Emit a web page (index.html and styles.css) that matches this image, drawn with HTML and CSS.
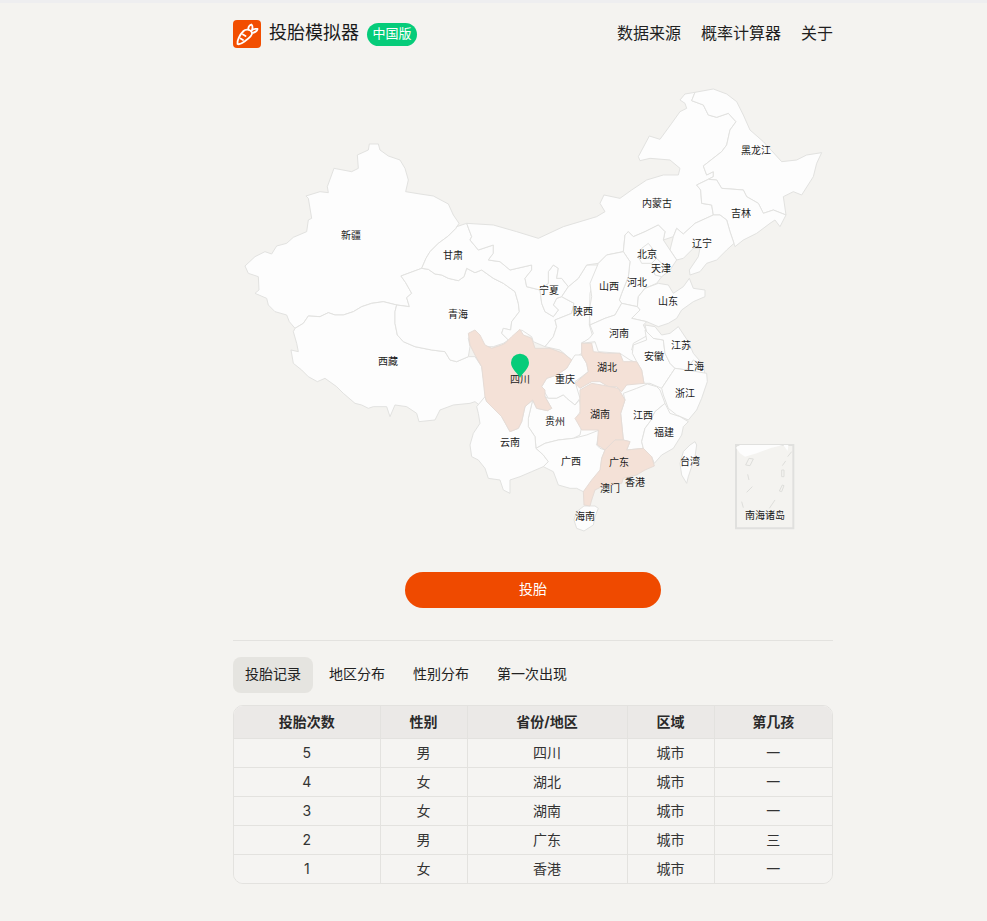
FILE: index.html
```html
<!DOCTYPE html>
<html lang="zh-CN">
<head>
<meta charset="utf-8">
<title>投胎模拟器</title>
<link rel="stylesheet" href="styles.css">
</head>
<body>
<div class="topbar"></div>
<main class="page">
  <header class="header">
    <div class="brand">
      <svg class="logo" viewBox="0 0 28 28" aria-hidden="true">
        <rect class="logo-bg" width="28" height="28" rx="4"/>
        <path class="logo-line" d="M4.500 24C3.800 21 6.500 15 10.500 11C13 8.500 17.500 9.500 19 12.500C19.800 15 15 19 11.500 21.500C9 23.300 6 24.800 4.500 24Z"/>
        <path class="logo-line" d="M15.500 9.500C15 7.500 16 5.500 18.500 4.500C19.800 6 19.800 8 18.800 10.500M18.800 10.500C20 9 22 8.500 24.500 9C24.200 11 22.500 12 20 12.800M10 14.500L12.500 16M7.500 18.500L10 20"/>
      </svg>
      <span class="title">投胎模拟器</span>
      <span class="badge">中国版</span>
    </div>
    <nav class="nav">
      <a>数据来源</a>
      <a>概率计算器</a>
      <a>关于</a>
    </nav>
  </header>

  <svg class="map" viewBox="233 70 600 480" role="img" aria-label="中国地图">
    <polygon class="fill" points="480,250 600,250 640,240 650,300 600,340 520,335"/>
    <polygon class="fill" points="585,345 640,335 680,350 695,390 670,440 640,455 580,470 530,450 505,420 535,395 555,355"/>
    <g transform="translate(240,130) scale(.33333)">
      <polygon class="land" points="388,42 415,42 420,60 445,78 480,90 495,115 505,150 497,185 540,192 580,198 625,222 640,255 657,280 648,295 625,318 595,340 570,365 558,385 545,415 483,438 497,458 515,490 500,503 508,530 470,525 430,515 395,520 365,530 340,545 310,555 285,555 265,548 240,560 205,558 190,580 165,595 148,575 140,555 105,545 85,525 80,505 45,490 57,480 55,440 25,430 15,408 45,380 75,365 95,372 110,348 140,340 160,322 200,305 205,270 215,265 205,205 198,198 240,185 265,188 262,170 282,115 335,125 355,115 352,75 385,60"/>
      <polygon class="land" points="165,595 190,580 205,558 240,560 265,548 285,555 310,555 340,545 365,530 395,520 430,515 470,525 465,545 465,580 472,615 490,635 525,650 575,660 615,665 630,690 650,695 685,680 705,680 725,710 735,775 738,825 718,825 705,815 690,820 640,825 600,840 585,870 537,875 530,850 500,830 465,825 450,860 440,830 400,830 385,835 365,825 345,820 310,790 290,770 255,745 232,755 205,740 185,720 160,700 153,660 175,665 170,640 160,605"/>
      <polygon class="land" points="483,438 545,415 565,418 585,432 605,435 625,445 655,452 672,440 680,415 705,428 725,420 760,445 790,460 825,485 835,520 838,545 815,575 812,600 790,595 785,610 805,630 790,640 760,650 735,650 700,605 685,625 690,650 685,680 650,695 630,690 615,665 575,660 525,650 490,635 472,615 465,580 465,545 470,525 508,530 500,503 515,490 497,458"/>
    </g>
    <g transform="translate(450,190) scale(.33333)">
      <polygon class="land" points="50,100 65,140 60,150 85,180 130,165 130,190 115,210 150,215 180,240 245,225 245,240 225,265 230,290 270,300 275,340 285,365 310,380 325,360 310,345 320,325 335,320 372,340 365,370 315,390 320,410 310,440 285,470 250,455 245,440 215,420 190,450 175,450 155,430 160,415 182,420 185,395 208,365 205,340 195,305 160,280 130,265 95,240 75,248 50,235 42,260 25,272 -5,265 -25,255 -45,252 -65,238 -85,235 -72,205 -60,185 -35,160 -5,138 18,115 20,110"/>
      <polygon class="land" points="295,245 310,225 325,235 320,265 335,265 355,290 335,320 320,325 310,345 325,360 310,380 285,365 275,340 270,300 295,280"/>
      <polygon class="land" points="355,290 385,265 410,225 445,225 420,310 418,405 430,445 395,458 395,490 365,510 330,480 285,470 310,440 320,410 315,390 365,370 372,340 335,320"/>
    </g>
    <g transform="translate(530,80) scale(.33333)">
      <polygon class="land" points="-190,430 -110,435 -40,455 25,475 100,440 200,410 225,395 210,370 222,345 270,355 305,330 350,300 400,285 445,285 450,265 420,240 360,235 330,242 325,230 358,168 390,178 425,130 450,95 470,85 465,70 450,60 465,42 495,37 485,62 520,75 535,105 560,112 595,100 618,125 600,150 590,195 575,215 520,258 530,285 550,275 550,290 535,298 500,315 512,330 515,370 545,375 550,405 495,430 460,462 440,445 430,470 400,480 405,455 385,435 345,455 310,470 295,455 285,465 280,515 230,525 205,550 170,555 145,595 115,620 95,595 80,595 85,565 70,555 55,575 55,610 30,630 -10,620 -15,595 5,570 5,555 -60,570 -90,545 -125,540 -110,520 -110,495 -155,510 -180,480 -175,470"/>
      <polygon class="land" points="495,37 550,27 590,42 620,65 640,105 660,150 700,185 755,245 800,240 830,225 875,218 860,250 850,290 815,345 790,335 760,350 768,405 730,390 700,400 685,370 650,350 640,330 575,325 560,300 535,298 550,290 550,275 530,285 520,258 575,215 590,195 600,150 618,125 595,100 560,112 535,105 520,75 485,62"/>
      <polygon class="land" points="500,315 535,298 560,300 575,325 640,330 650,350 685,370 700,400 730,390 768,405 750,440 735,420 720,430 680,460 640,480 615,500 600,455 590,420 570,405 550,405 545,375 515,370 512,330"/>
      <polygon class="land" points="550,405 570,405 590,420 600,455 612,490 590,510 560,540 530,550 510,575 480,585 478,570 505,530 510,505 490,505 460,535 440,540 420,510 430,470 440,445 460,462 495,430"/>
      <polygon class="land" points="285,465 295,455 310,470 345,455 385,435 405,455 400,480 420,510 440,540 420,570 395,590 380,610 345,625 325,650 322,680 275,670 268,660 275,640 295,590 300,545 280,515"/>
      <polygon class="land" points="325,530 335,505 355,490 375,515 380,535 365,550 335,550"/>
      <polygon class="land" points="365,550 380,535 395,550 420,570 395,590 375,585"/>
      <polygon class="land" points="322,680 325,650 345,625 385,610 415,615 430,640 460,620 478,595 490,625 525,630 525,650 490,665 455,690 440,715 415,730 385,740 350,725 305,715 330,690"/>
      <polygon class="land" points="180,610 205,550 230,525 280,515 300,545 295,590 275,640 268,660 275,670 255,705 225,715 180,735 178,690 185,650"/>
      <polygon class="land" points="180,735 225,715 255,705 275,670 322,680 330,690 305,715 350,725 340,735 355,765 310,790 305,810 320,820 335,855 300,840 270,820 205,815 195,785 155,790 178,775 190,760"/>
    </g>
    <g transform="translate(460,320) scale(.33333)">
      <polygon class="land" points="335,120 345,105 365,105 380,130 385,155 345,185 360,235 345,255 320,235 310,225 290,235 265,235 250,210 245,200 260,175 290,165 320,145"/>
      <polygon class="land" points="205,295 218,240 230,265 262,272 275,265 255,230 265,235 290,235 310,225 320,235 345,255 358,240 365,270 350,290 365,320 360,345 340,355 295,360 255,370 228,385 225,350 205,320"/>
      <polygon class="land" points="50,260 75,230 80,245 100,265 125,290 150,335 175,325 185,305 195,260 218,240 205,295 205,320 225,350 228,385 250,405 265,425 250,440 215,455 180,470 150,480 150,520 130,510 120,480 85,475 75,445 55,420 35,410 30,375 40,340 60,310 55,280"/>
      <polygon class="land" points="228,385 255,370 295,360 340,355 380,345 418,330 410,375 420,385 435,390 425,415 420,470 395,490 370,515 350,505 330,505 295,495 280,455 250,440 265,425 250,405"/>
      <polygon class="land" points="520,75 560,60 555,30 580,55 610,60 615,100 630,130 645,145 635,160 605,205 570,190 552,190 545,150 530,125 517,100"/>
      <polygon class="land" points="555,15 585,20 605,45 630,40 655,20 685,65 700,100 730,135 705,130 680,150 645,145 630,130 615,100 610,60 580,55 560,35"/>
      <polygon class="land" points="700,120 730,135 735,165 700,155 680,150"/>
      <polygon class="land" points="605,205 635,160 645,145 680,150 740,160 742,185 725,235 710,270 685,300 650,285 625,265 610,225"/>
      <polygon class="hit" points="25,40 45,30 60,45 75,75 95,85 125,75 135,70 155,50 180,28 190,45 215,55 225,85 270,85 310,100 335,120 320,145 290,165 260,175 245,200 255,210 255,230 275,265 262,272 230,265 218,240 195,260 185,305 175,325 150,335 125,290 100,265 80,245 75,230 65,140 45,105 30,75"/>
      <polygon class="hit" points="365,70 395,70 400,95 440,100 480,100 490,125 530,125 545,150 552,190 500,195 485,215 470,200 445,200 420,185 395,185 360,205 345,190 385,155 380,130 365,105"/>
    </g>
    <g transform="translate(560,380) scale(.33333)">
      <polygon class="land" points="195,60 190,40 230,25 262,12 290,20 300,30 315,70 285,95 270,125 255,145 245,185 250,205 200,210 210,185 190,180 182,100"/>
      <polygon class="land" points="245,185 255,145 270,125 285,95 315,70 330,100 360,110 385,125 370,140 365,165 340,205 305,225 283,250 275,230 250,205"/>
      <polygon class="land" points="405,185 410,195 405,230 385,290 380,310 365,285 360,250 370,215 390,195"/>
      <polygon class="land" points="72,378 105,378 115,385 105,410 100,435 72,453 50,445 42,420 50,395"/>
      <polygon class="hit" points="60,30 95,10 125,15 175,25 195,60 182,100 190,180 165,180 135,210 112,195 115,150 65,150 45,115 60,100"/>
      <polygon class="hit" points="135,210 165,180 190,180 210,185 200,210 250,205 275,230 283,258 255,270 230,285 190,295 185,310 155,315 125,320 105,330 95,360 90,378 72,375 70,335 95,300 120,270 125,235"/>
    </g>
    <g transform="translate(725,435) scale(.33333)">
      <rect class="inset" x="33" y="30" width="172" height="250"/>
      <polygon class="land-soft" points="33,38 45,30 175,30 140,38 95,55 60,65 45,55"/>
      <polygon class="land-soft" points="175,30 190,30 188,48"/>
      <polygon class="isle" points="62,90 72,70 85,72 75,92"/>
      <polygon class="isle" points="170,105 177,105 177,125 170,125"/>
      <polygon class="isle" points="163,168 172,150 177,152 170,170"/>
      <path class="isle" d="M68 118L72 135M65 172L82 155M50 200L55 218M133 220L150 195M172 92L182 78M188 65L200 50"/>
    </g>
    <g class="labels">
      <text x="351" y="239">新疆</text>
      <text x="453" y="259">甘肃</text>
      <text x="458" y="318">青海</text>
      <text x="388" y="365">西藏</text>
      <text x="520" y="383">四川</text>
      <text x="510" y="446">云南</text>
      <text x="549" y="294">宁夏</text>
      <text x="583" y="315">陕西</text>
      <text x="609" y="290">山西</text>
      <text x="637" y="286">河北</text>
      <text x="647" y="258">北京</text>
      <text x="661" y="272">天津</text>
      <text x="657" y="207">内蒙古</text>
      <text x="756" y="154">黑龙江</text>
      <text x="741" y="217">吉林</text>
      <text x="702" y="247">辽宁</text>
      <text x="668" y="305">山东</text>
      <text x="619" y="337">河南</text>
      <text x="681" y="349">江苏</text>
      <text x="654" y="360">安徽</text>
      <text x="694" y="370">上海</text>
      <text x="607" y="371">湖北</text>
      <text x="565" y="383">重庆</text>
      <text x="685" y="397">浙江</text>
      <text x="600" y="418">湖南</text>
      <text x="555" y="425">贵州</text>
      <text x="643" y="419">江西</text>
      <text x="664" y="436">福建</text>
      <text x="571" y="465">广西</text>
      <text x="619" y="466">广东</text>
      <text x="690" y="465">台湾</text>
      <text x="635" y="486">香港</text>
      <text x="610" y="492">澳门</text>
      <text x="585" y="520">海南</text>
      <text x="765" y="519">南海诸岛</text>
    </g>
    <path class="pin" d="M520 378C518 373 511 369 511 362.700A9 9 0 0 1 529 362.700C529 369 522 373 520 378Z"/>
  </svg>

  <div class="action">
    <button class="primary" type="button">投胎</button>
  </div>

  <hr class="rule">

  <div class="tabs">
    <button class="tab active" type="button">投胎记录</button>
    <button class="tab" type="button">地区分布</button>
    <button class="tab" type="button">性别分布</button>
    <button class="tab" type="button">第一次出现</button>
  </div>

  <div class="table-wrap">
    <table class="records">
      <colgroup>
        <col class="c1"><col class="c2"><col class="c3"><col class="c4"><col class="c5">
      </colgroup>
      <thead>
        <tr><th>投胎次数</th><th>性别</th><th>省份/地区</th><th>区域</th><th>第几孩</th></tr>
      </thead>
      <tbody>
        <tr><td>5</td><td>男</td><td>四川</td><td>城市</td><td>一</td></tr>
        <tr><td>4</td><td>女</td><td>湖北</td><td>城市</td><td>一</td></tr>
        <tr><td>3</td><td>女</td><td>湖南</td><td>城市</td><td>一</td></tr>
        <tr><td>2</td><td>男</td><td>广东</td><td>城市</td><td>三</td></tr>
        <tr><td>1</td><td>女</td><td>香港</td><td>城市</td><td>一</td></tr>
      </tbody>
    </table>
  </div>
</main>
</body>
</html>
```

FILE: styles.css
```css
* {
  box-sizing: border-box;
}

html,
body {
  margin: 0;
  padding: 0;
  background: #f4f3f0;
}

body {
  font-family: Inter, "Noto Sans CJK SC", sans-serif;
  color: #1c1c1c;
  overflow-x: hidden;
}

.topbar {
  height: 3px;
  background: #eeeef0;
}

.page {
  width: 600px;
  margin-left: 233px;
  padding-bottom: 37px;
}

.header {
  display: flex;
  align-items: center;
  justify-content: space-between;
  height: 28px;
  margin-top: 17px;
}

.brand {
  display: flex;
  align-items: center;
}

.logo {
  display: block;
  width: 28px;
  height: 28px;
}

.logo-bg {
  fill: #f24e00;
}

.logo-line {
  fill: none;
  stroke: #ffffff;
  stroke-width: 1.8;
  stroke-linejoin: round;
  stroke-linecap: round;
}

.title {
  margin-left: 8px;
  padding-bottom: 2px;
  font-size: 18px;
  line-height: 26px;
  color: #1a1a1a;
}

.badge {
  display: block;
  width: 50px;
  height: 23px;
  margin-left: 8px;
  border-radius: 12px;
  background: #06cc7a;
  color: #ffffff;
  font-size: 13px;
  line-height: 21px;
  text-align: center;
}

.nav {
  display: flex;
  gap: 20px;
  padding-bottom: 2px;
  font-size: 16px;
  line-height: 26px;
  color: #1f1f1f;
}

.map {
  display: block;
  width: 600px;
  height: 480px;
  margin-top: 22px;
}

.fill {
  fill: #fdfdfd;
}

.land {
  fill: #fdfdfd;
  stroke: #e2e2e0;
  stroke-width: 1;
  stroke-linejoin: round;
  vector-effect: non-scaling-stroke;
}

.hit {
  fill: #f4e1d7;
  stroke: #e6dcd6;
  stroke-width: 1;
  stroke-linejoin: round;
  vector-effect: non-scaling-stroke;
}

.inset {
  fill: #f4f3f0;
  stroke: #e0e0de;
  stroke-width: 2;
  vector-effect: non-scaling-stroke;
}

.land-soft {
  fill: #fdfdfd;
}

.isle {
  fill: none;
  stroke: #dededb;
  stroke-width: 1;
  vector-effect: non-scaling-stroke;
}

.labels text {
  font-family: "Noto Sans CJK SC", sans-serif;
  font-size: 10px;
  fill: #1a1a1a;
  text-anchor: middle;
}

.pin {
  fill: #06cc7a;
}

.action {
  display: flex;
  justify-content: center;
  margin-top: 22px;
}

.primary {
  display: block;
  width: 256px;
  height: 36px;
  padding: 0 0 4px;
  border: 0;
  border-radius: 18px;
  background: #ef4a00;
  color: #ffffff;
  font-family: inherit;
  font-size: 14px;
}

.rule {
  height: 1px;
  margin: 32px 0 0;
  border: 0;
  background: #e3e2df;
}

.tabs {
  display: flex;
  gap: 4px;
  margin-top: 16px;
}

.tab {
  height: 36px;
  padding: 0 12px 4px;
  border: 0;
  border-radius: 8px;
  background: transparent;
  color: #222222;
  font-family: inherit;
  font-size: 14px;
}

.tab.active {
  background: #e5e4e0;
}

.table-wrap {
  margin-top: 12px;
  border: 1px solid #e3e2df;
  border-radius: 10px;
  overflow: hidden;
}

.records {
  width: 100%;
  border-collapse: separate;
  border-spacing: 0;
  table-layout: fixed;
  font-size: 14px;
  background: #f5f4f2;
}

.c1 { width: 146.500px; }
.c2 { width: 87px; }
.c3 { width: 160px; }
.c4 { width: 87px; }

.records th,
.records td {
  padding: 0 0 2px;
  text-align: center;
  border-right: 1px solid #e3e2df;
  border-bottom: 1px solid #e3e2df;
}

.records th:last-child,
.records td:last-child {
  border-right: 0;
}

.records tbody tr:last-child td {
  border-bottom: 0;
  height: 28px;
}

.records th {
  height: 33px;
  background: #ebe9e7;
  color: #2a2a2a;
  font-weight: 700;
}

.records td {
  height: 29px;
  color: #333333;
}
```
